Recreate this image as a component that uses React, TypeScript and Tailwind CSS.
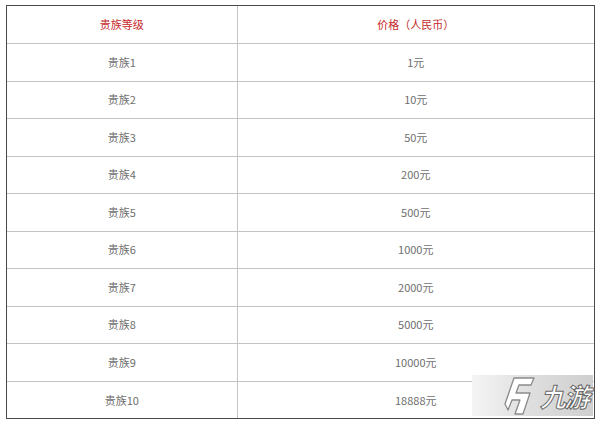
import React from "react";

const rows: [string, string][] = [
  ["贵族1", "1元"],
  ["贵族2", "10元"],
  ["贵族3", "50元"],
  ["贵族4", "200元"],
  ["贵族5", "500元"],
  ["贵族6", "1000元"],
  ["贵族7", "2000元"],
  ["贵族8", "5000元"],
  ["贵族9", "10000元"],
  ["贵族10", "18888元"],
];

export default function App() {
  return (
    <div
      className="w-[600px] h-[425px] bg-white relative"
      style={{ fontFamily: '"Noto Sans CJK SC", "Noto Sans", sans-serif' }}
    >
      <div className="pt-[5px] pl-[6px]">
        <div className="w-[589px] border border-[#4a4a4a]">
          <table className="border-collapse border-hidden w-full table-fixed">
            <colgroup>
              <col className="w-[230px]" />
              <col />
            </colgroup>
            <thead>
              <tr className="h-[37px]">
                <th className="border border-[#c4c4c4] text-[11px] font-normal text-[#c52a2a] text-center">
                  贵族等级
                </th>
                <th className="border border-[#c4c4c4] text-[11px] font-normal text-[#c52a2a] text-center">
                  价格（人民币）
                </th>
              </tr>
            </thead>
            <tbody>
              {rows.map(([a, b], i) => (
                <tr key={i} className={i % 2 === 0 ? "h-[38px]" : "h-[37px]"}>
                  <td className="border border-[#c4c4c4] text-[11px] text-[#6e6e6e] text-center">{a}</td>
                  <td className="border border-[#c4c4c4] text-[11px] text-[#6e6e6e] text-center">{b}</td>
                </tr>
              ))}
            </tbody>
          </table>
        </div>
      </div>
      <div className="absolute left-[472px] top-[375px] w-[121px] h-[41px] bg-gradient-to-r from-[#f4f4f4] via-[#dedede] to-[#cfcfcf] flex items-center pl-[32px] gap-[2px]">
        <svg width="34" height="40" viewBox="0 0 34 40">
          <path
            d="M10 2 L30 2 L27 9 L15 9 L12 17 L26 17 L19 38 L11 38 L16 24 L8 24 L4 34 L1 28 Z"
            fill="#ffffff"
            stroke="#8a8a8a"
            strokeWidth="1.3"
            strokeLinejoin="round"
          />
        </svg>
        <span
          className="text-[26px] italic font-bold text-white leading-none tracking-[-2px]"
          style={{ WebkitTextStroke: "1px #6a6a6a" }}
        >
          九游
        </span>
      </div>
    </div>
  );
}
